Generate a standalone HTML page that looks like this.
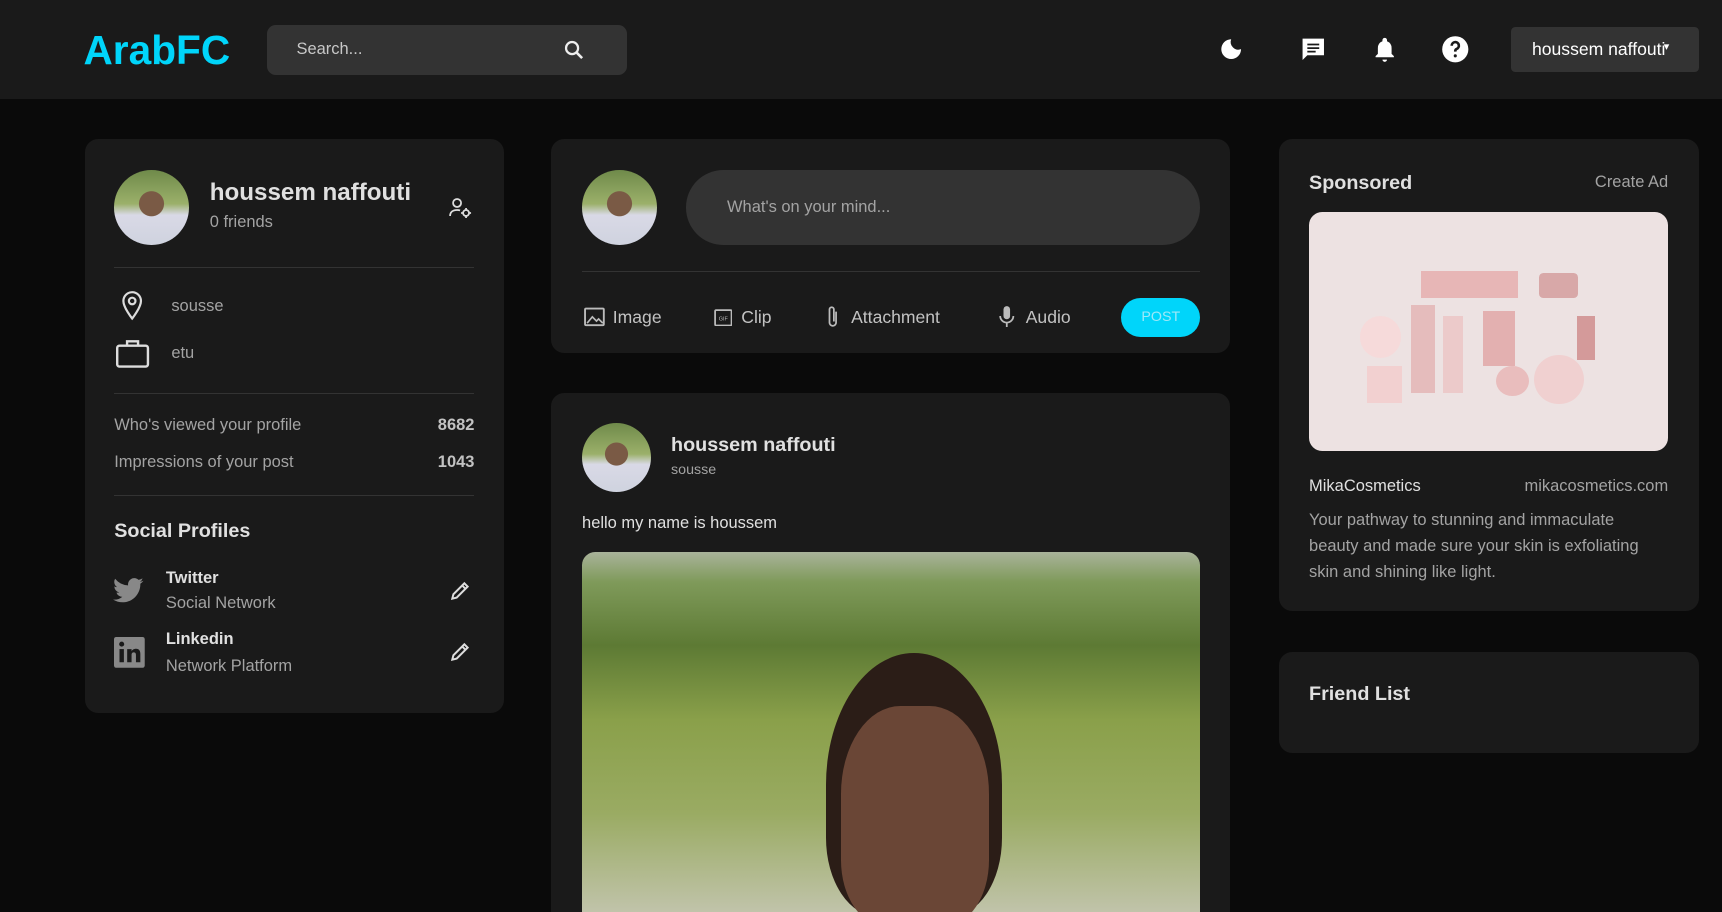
<!DOCTYPE html>
<html><head><meta charset="utf-8">
<style>
*{margin:0;padding:0;box-sizing:border-box}
html,body{width:1722px;height:912px;overflow:hidden;background:#0a0a0a}
#w{zoom:1.0982;width:1568px;height:831px;position:relative;font-family:"Liberation Sans",sans-serif;color:#e0e0e0}
.a{position:absolute}
.card{position:absolute;background:#1a1a1a;border-radius:12px}
.av{position:absolute;border-radius:50%;overflow:hidden;background:radial-gradient(circle at 50% 45%,#7a5a45 0 22%,transparent 23%),linear-gradient(180deg,#6f8a4a 0%,#9bb06a 45%,#d9d9e6 60%,#cfd3df 100%)}
.dv{position:absolute;height:1px;background:#333}
.g{color:#a3a3a3}
.t{position:absolute;white-space:nowrap;line-height:1}
svg{position:absolute}
</style></head><body><div id="w">
<div class="a" style="left:0;top:0;width:1568px;height:90px;background:#1a1a1a"></div>
<div class="t" style="left:76px;top:27px;font-size:37px;font-weight:bold;color:#00d5fa">ArabFC</div>
<div class="a" style="left:243px;top:23px;width:328px;height:45px;background:#333;border-radius:8px"></div>
<div class="t g" style="left:270px;top:37px;font-size:15px;color:#c8c8c8">Search...</div>
<svg style="left:512px;top:35px" width="22" height="22" viewBox="0 0 24 24"><circle cx="10" cy="10" r="6" fill="none" stroke="#eee" stroke-width="2.2"/><path d="M14.5 14.5L20 20" stroke="#eee" stroke-width="2.6"/></svg>
<svg style="left:1109px;top:33px" width="24" height="24" viewBox="0 0 24 24"><path d="M12 3a9 9 0 1 0 9 9A7 7 0 0 1 12 3z" fill="#fff"/></svg>
<svg style="left:1183px;top:32px" width="26" height="26" viewBox="0 0 24 24"><path d="M3 3h18v14H7l-4 4z" fill="#fff"/><path d="M7 8h10M7 11h10M7 14h7" stroke="#1a1a1a" stroke-width="1.5"/></svg>
<svg style="left:1248px;top:32px" width="25" height="26" viewBox="0 0 24 24"><path d="M12 2a2 2 0 0 1 2 2v1a6 6 0 0 1 4 6v5l2 2v1H4v-1l2-2v-5a6 6 0 0 1 4-6V4a2 2 0 0 1 2-2zM10 21h4a2 2 0 0 1-4 0z" fill="#fff"/></svg>
<svg style="left:1312px;top:32px" width="26" height="26" viewBox="0 0 24 24"><circle cx="12" cy="12" r="11" fill="#fff"/><path d="M9 9a3 3 0 1 1 4 2.8c-.8.4-1 .9-1 1.7v.5" fill="none" stroke="#1a1a1a" stroke-width="2.2"/><circle cx="12" cy="17.5" r="1.3" fill="#1a1a1a"/></svg>
<div class="a" style="left:1376px;top:25px;width:171px;height:41px;background:#333;border-radius:4px"></div>
<div class="t" style="left:1395px;top:37px;font-size:16px;color:#fff">houssem naffouti</div>
<div class="t" style="left:1515px;top:38px;font-size:10px;color:#fff">▾</div>

<div class="card" style="left:77px;top:127px;width:382px;height:522px"></div>
<div class="av" style="left:104px;top:155px;width:68px;height:68px"></div>
<div class="t" style="left:191px;top:165px;font-size:22px;font-weight:bold">houssem naffouti</div>
<div class="t g" style="left:191px;top:195px;font-size:15px">0 friends</div>
<svg style="left:408px;top:179px" width="22" height="20" viewBox="0 0 24 22"><circle cx="9" cy="6" r="4" fill="none" stroke="#ddd" stroke-width="1.8"/><path d="M2 19c0-4 3-6 7-6 1 0 2 .1 3 .5" fill="none" stroke="#ddd" stroke-width="1.8"/><circle cx="18" cy="16" r="3" fill="none" stroke="#ddd" stroke-width="1.8"/><path d="M18 11v2M18 19v2M13 16h2M21 16h2" stroke="#ddd" stroke-width="1.8"/></svg>
<div class="dv" style="left:104px;top:243px;width:328px"></div>
<svg style="left:108px;top:264px" width="24" height="28" viewBox="0 0 24 28"><path d="M12 2a8 8 0 0 0-8 8c0 6 8 16 8 16s8-10 8-16a8 8 0 0 0-8-8z" fill="none" stroke="#ddd" stroke-width="2"/><circle cx="12" cy="10" r="3" fill="none" stroke="#ddd" stroke-width="2"/></svg>
<div class="t g" style="left:156px;top:271px;font-size:15px">sousse</div>
<svg style="left:105px;top:308px" width="32" height="28" viewBox="0 0 32 28"><rect x="2" y="7" width="28" height="19" rx="2" fill="none" stroke="#ddd" stroke-width="2.2"/><path d="M11 7V3h10v4" fill="none" stroke="#ddd" stroke-width="2.2"/></svg>
<div class="t g" style="left:156px;top:314px;font-size:15px">etu</div>
<div class="dv" style="left:104px;top:358px;width:328px"></div>
<div class="t g" style="left:104px;top:380px;font-size:15px">Who's viewed your profile</div>
<div class="t" style="right:1136px;top:380px;font-size:15px;font-weight:bold;color:#c2c2c2">8682</div>
<div class="t g" style="left:104px;top:413px;font-size:15px">Impressions of your post</div>
<div class="t" style="right:1136px;top:413px;font-size:15px;font-weight:bold;color:#c2c2c2">1043</div>
<div class="dv" style="left:104px;top:451px;width:328px"></div>
<div class="t" style="left:104px;top:475px;font-size:18px;font-weight:bold">Social Profiles</div>
<svg style="left:103px;top:525px" width="29" height="25" viewBox="0 0 24 20"><path d="M23 2.5a9 9 0 0 1-2.7.8A4.7 4.7 0 0 0 22.3.7a9 9 0 0 1-3 1.1A4.7 4.7 0 0 0 11.4 6 13.3 13.3 0 0 1 1.6 1a4.7 4.7 0 0 0 1.5 6.3 4.7 4.7 0 0 1-2.1-.6 4.7 4.7 0 0 0 3.7 4.6 4.7 4.7 0 0 1-2.1.1 4.7 4.7 0 0 0 4.400 3.2A9.4 9.4 0 0 1 0 16.6 13.3 13.3 0 0 0 7.2 18.7c8.6 0 13.4-7.2 13.4-13.4v-.6A9.6 9.6 0 0 0 23 2.5z" fill="#888"/></svg>
<div class="t" style="left:151px;top:519px;font-size:15px;font-weight:bold">Twitter</div>
<div class="t g" style="left:151px;top:542px;font-size:15px">Social Network</div>
<svg style="left:409px;top:528px" width="20" height="20" viewBox="0 0 20 20"><path d="M3 17l1-4L14 3l3 3L7 16zM12 5l3 3" fill="none" stroke="#ddd" stroke-width="1.8"/></svg>
<svg style="left:104px;top:580px" width="28" height="28" viewBox="0 0 28 28"><rect width="28" height="28" rx="2" fill="#888"/><rect x="5" y="11" width="4" height="12" fill="#1a1a1a"/><circle cx="7" cy="6.5" r="2.3" fill="#1a1a1a"/><path d="M12 11h4v2c1-2 3-2.3 4-2.3 3 0 4 2 4 5V23h-4v-6.5c0-1.5-.5-2.5-2-2.5s-2 1-2 2.5V23h-4z" fill="#1a1a1a"/></svg>
<div class="t" style="left:151px;top:575px;font-size:15px;font-weight:bold">Linkedin</div>
<div class="t g" style="left:151px;top:599px;font-size:15px">Network Platform</div>
<svg style="left:409px;top:584px" width="20" height="20" viewBox="0 0 20 20"><path d="M3 17l1-4L14 3l3 3L7 16zM12 5l3 3" fill="none" stroke="#ddd" stroke-width="1.8"/></svg>

<div class="card" style="left:502px;top:127px;width:618px;height:194px"></div>
<div class="av" style="left:530px;top:155px;width:68px;height:68px"></div>
<div class="a" style="left:625px;top:155px;width:468px;height:68px;background:#333;border-radius:34px"></div>
<div class="t g" style="left:662px;top:181px;font-size:15px">What's on your mind...</div>
<div class="dv" style="left:530px;top:247px;width:563px"></div>
<svg style="left:532px;top:280px" width="19" height="18" viewBox="0 0 20 18"><rect x="1" y="1" width="18" height="16" rx="1" fill="none" stroke="#bbb" stroke-width="1.8"/><path d="M3 15l5-6 4 4 2-2 4 4" fill="none" stroke="#bbb" stroke-width="1.6"/></svg>
<div class="t" style="left:558px;top:281px;font-size:16px;color:#c2c2c2">Image</div>
<svg style="left:650px;top:281px" width="17" height="16" viewBox="0 0 17 16"><rect x="1" y="1" width="15" height="14" rx="1" fill="none" stroke="#bbb" stroke-width="1.6"/><text x="8.5" y="10.5" font-size="5" fill="#bbb" text-anchor="middle" font-family="Liberation Sans">GIF</text></svg>
<div class="t" style="left:675px;top:281px;font-size:16px;color:#c2c2c2">Clip</div>
<svg style="left:750px;top:278px" width="16" height="22" viewBox="0 0 16 22"><path d="M11 6v10a3 3 0 0 1-6 0V4a2 2 0 0 1 4 0v11" fill="none" stroke="#bbb" stroke-width="1.6"/></svg>
<div class="t" style="left:775px;top:281px;font-size:16px;color:#c2c2c2">Attachment</div>
<svg style="left:909px;top:278px" width="16" height="22" viewBox="0 0 16 22"><rect x="5" y="1" width="6" height="12" rx="3" fill="#bbb"/><path d="M2 10a6 6 0 0 0 12 0M8 16v4" fill="none" stroke="#bbb" stroke-width="1.6"/></svg>
<div class="t" style="left:934px;top:281px;font-size:16px;color:#c2c2c2">Audio</div>
<div class="a" style="left:1021px;top:271px;width:72px;height:36px;background:#00d5fa;border-radius:18px"></div>
<div class="t" style="left:1021px;top:282px;width:72px;text-align:center;font-size:13px;color:#9ee8f8">POST</div>

<div class="card" style="left:502px;top:358px;width:618px;height:500px"></div>
<div class="av" style="left:530px;top:385px;width:63px;height:63px"></div>
<div class="t" style="left:611px;top:397px;font-size:18px;font-weight:bold">houssem naffouti</div>
<div class="t g" style="left:611px;top:422px;font-size:13px">sousse</div>
<div class="t" style="left:530px;top:469px;font-size:15px">hello my name is houssem</div>
<div class="a" style="left:530px;top:503px;width:563px;height:340px;border-radius:12px 12px 0 0;overflow:hidden;background:linear-gradient(180deg,#a9b39a 0%,#7f9a5a 8%,#5d7a34 25%,#8aa04a 45%,#9aab63 70%,#c6c7b4 100%)">
<div class="a" style="left:222px;top:92px;width:160px;height:240px;border-radius:50% 50% 30% 30%;background:#2b1d17"></div>
<div class="a" style="left:236px;top:140px;width:135px;height:200px;border-radius:40% 40% 30% 30%;background:#6a4636"></div>
</div>

<div class="card" style="left:1165px;top:127px;width:382px;height:429px"></div>
<div class="t" style="left:1192px;top:158px;font-size:18px;font-weight:bold">Sponsored</div>
<div class="t g" style="right:49px;top:158px;font-size:15px">Create Ad</div>
<div class="a" style="left:1192px;top:193px;width:327px;height:218px;border-radius:12px;background:#ede2e2">
<div class="a" style="left:102px;top:54px;width:88px;height:24px;background:#e7b6b6"></div>
<div class="a" style="left:209px;top:56px;width:36px;height:22px;border-radius:4px;background:#d8a8a8"></div>
<div class="a" style="left:46px;top:95px;width:38px;height:38px;border-radius:50%;background:#f6dada"></div>
<div class="a" style="left:93px;top:85px;width:22px;height:80px;background:#e5bcbc"></div>
<div class="a" style="left:122px;top:95px;width:18px;height:70px;background:#eccaca"></div>
<div class="a" style="left:158px;top:90px;width:30px;height:50px;background:#e3b0b0"></div>
<div class="a" style="left:53px;top:140px;width:32px;height:34px;background:#f2d0d0"></div>
<div class="a" style="left:170px;top:140px;width:30px;height:28px;border-radius:50%;background:#e9bdbd"></div>
<div class="a" style="left:205px;top:130px;width:45px;height:45px;border-radius:50%;background:#f0d0d0"></div>
<div class="a" style="left:244px;top:95px;width:16px;height:40px;background:#d49a9a"></div>
</div>
<div class="t" style="left:1192px;top:435px;font-size:15px">MikaCosmetics</div>
<div class="t g" style="right:49px;top:435px;font-size:15px">mikacosmetics.com</div>
<div class="a g" style="left:1192px;top:463px;width:320px;font-size:15px;line-height:23.5px">Your pathway to stunning and immaculate beauty and made sure your skin is exfoliating skin and shining like light.</div>
<div class="card" style="left:1165px;top:594px;width:382px;height:92px"></div>
<div class="t" style="left:1192px;top:624px;font-size:18px;font-weight:bold">Friend List</div>
</div></body></html>
